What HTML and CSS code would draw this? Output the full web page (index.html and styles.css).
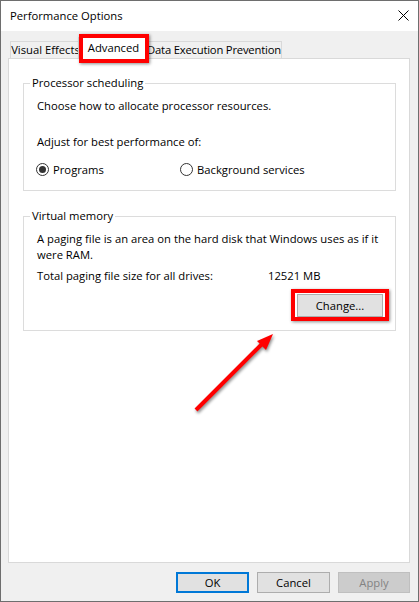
FILE: index.html
```html
<!DOCTYPE html>
<html lang="en">
<head>
    <meta charset="UTF-8">
    <meta name="viewport" content="width=device-width, initial-scale=1.0">
    <title>Performance Options</title>
    <link rel="stylesheet" href="styles.css">
</head>
<body>
    <div class="window">
        <div class="titlebar">
            <span class="title">Performance Options</span>
            <svg class="close" width="11" height="11" viewBox="0 0 11 11">
                <path d="M0.5 0.5 L10.5 10.5 M10.5 0.5 L0.5 10.5" stroke="#000" stroke-width="1" fill="none"/>
            </svg>
        </div>

        <div class="content">
            <div class="tabs">
                <div class="tab tab-visual">Visual Effects</div>
                <div class="tab tab-advanced selected">Advanced</div>
                <div class="tab tab-dep">Data Execution Prevention</div>
            </div>

            <div class="panel">
                <fieldset class="group">
                    <legend>Processor scheduling</legend>
                    <p class="line first">Choose how to allocate processor resources.</p>
                    <p class="line adjust">Adjust for best performance of:</p>
                    <div class="radios">
                        <label class="radio"><span class="dot checked"></span>Programs</label>
                        <label class="radio"><span class="dot"></span>Background services</label>
                    </div>
                </fieldset>

                <fieldset class="group group-vm">
                    <legend>Virtual memory</legend>
                    <p class="line first">A paging file is an area on the hard disk that Windows uses as if it<br>were RAM.</p>
                    <div class="total">
                        <span class="total-label">Total paging file size for all drives:</span>
                        <span>12521 MB</span>
                    </div>
                    <div class="change-row">
                        <button class="btn change">Change...</button>
                    </div>
                </fieldset>
            </div>

            <div class="actions">
                <button class="btn ok">OK</button>
                <button class="btn cancel">Cancel</button>
                <button class="btn apply" disabled>Apply</button>
            </div>
        </div>

        <!-- annotation arrow pointing at the Change button -->
        <svg class="arrow" width="92" height="92" viewBox="0 0 92 92">
            <line x1="6" y1="82" x2="72" y2="16" stroke="#f00" stroke-width="4"/>
            <polygon points="83,6 67,13 76,22" fill="#f00"/>
        </svg>
    </div>
</body>
</html>
```

FILE: styles.css
```css
:root {
    --face: #f0f0f0;
    --tab-border: #d9d9d9;
    --group-border: #dcdcdc;
    --button-bg: #e1e1e1;
    --button-border: #adadad;
    --mark: #f00;
}

* {
    box-sizing: border-box;
}

body {
    margin: 0;
    font-family: 'Open Sans', 'Noto Sans', sans-serif;
    font-size: 11.25px;
    color: #000;
    background: #fff;
}

.window {
    position: relative;
    width: 419px;
    height: 602px;
    border: 1px solid #6e6e6e;
    background: var(--face);
    display: flex;
    flex-direction: column;
}

.titlebar {
    height: 30px;
    background: #fff;
    display: flex;
    align-items: center;
    justify-content: space-between;
    padding: 0 9px 2px 9px;
    font-size: 11.25px;
}

.content {
    flex: 1;
    display: flex;
    flex-direction: column;
    padding: 6px 8px 8px 7px;
}

/* tabs */
.tabs {
    display: flex;
    align-items: flex-end;
    padding-left: 2px;
}

.tab {
    height: 17px;
    line-height: 15px;
    text-align: center;
    border: 1px solid var(--tab-border);
    border-bottom: none;
    background: var(--face);
    white-space: nowrap;
}

.tab-visual {
    width: 70px;
    border-right: none;
}

.tab-advanced {
    width: 71px;
}

.tab-dep {
    width: 135px;
    border-left: none;
    letter-spacing: -0.2px;
}

.tab.selected {
    position: relative;
    z-index: 1;
    height: 22px;
    line-height: 19px;
    margin: 0 -2px -1px -2px;
    background: #fff;
}

.tab.selected::after {
    content: '';
    position: absolute;
    left: 0;
    right: -1px;
    top: -4px;
    bottom: -4px;
    border: 4px solid var(--mark);
    box-shadow: 1px 1px 3px rgba(0, 0, 0, 0.45);
}

/* panel */
.panel {
    flex: 1;
    background: #fff;
    border: 1px solid var(--tab-border);
    padding: 16px 13px 0 14px;
}

.group {
    margin: 0;
    min-width: 0;
    border: 1px solid var(--group-border);
    padding: 0 12px 13px 13px;
}

.group legend {
    height: 16px;
    line-height: 16px;
    padding: 0 2px;
    margin-left: -7px;
}

.group-vm {
    margin-top: 17px;
}

.line {
    margin: 0;
    line-height: 16px;
}

.line.first {
    margin-top: 7px;
}

.line.adjust {
    margin-top: 20px;
}

.radios {
    display: flex;
    align-items: center;
    height: 16px;
    margin: 11px 0 0 -1px;
}

.radio {
    width: 144px;
    display: flex;
    align-items: center;
    gap: 4px;
}

.dot {
    position: relative;
    width: 13px;
    height: 13px;
    border: 1px solid #333;
    border-radius: 50%;
    background: #fff;
}

.dot.checked::after {
    content: '';
    position: absolute;
    inset: 2px;
    border-radius: 50%;
    background: #333;
}

.total {
    display: flex;
    margin-top: 5px;
    line-height: 16px;
}

.total-label {
    width: 231px;
}

.change-row {
    display: flex;
    justify-content: flex-end;
    margin-top: 10px;
}

/* buttons */
.btn {
    font: inherit;
    color: #000;
    background: var(--button-bg);
    border: 1px solid var(--button-border);
    padding: 0;
    height: 21px;
    width: 73px;
}

.btn.change {
    position: relative;
    width: 86px;
    height: 23px;
}

.btn.change::after {
    content: '';
    position: absolute;
    left: -7px;
    right: -7px;
    top: -6px;
    bottom: -5px;
    border: 4px solid var(--mark);
    box-shadow: 1px 1px 3px rgba(0, 0, 0, 0.45);
}

.actions {
    display: flex;
    justify-content: flex-end;
    gap: 8px;
    margin-top: 9px;
}

.btn.ok {
    border: 2px solid #0078d7;
}

.btn.apply {
    width: 72px;
    background: #ccc;
    border-color: #bfbfbf;
    color: #838383;
}

.arrow {
    position: absolute;
    left: 189px;
    top: 327px;
    filter: drop-shadow(1px 2px 1.5px rgba(0, 0, 0, 0.45));
}
```
